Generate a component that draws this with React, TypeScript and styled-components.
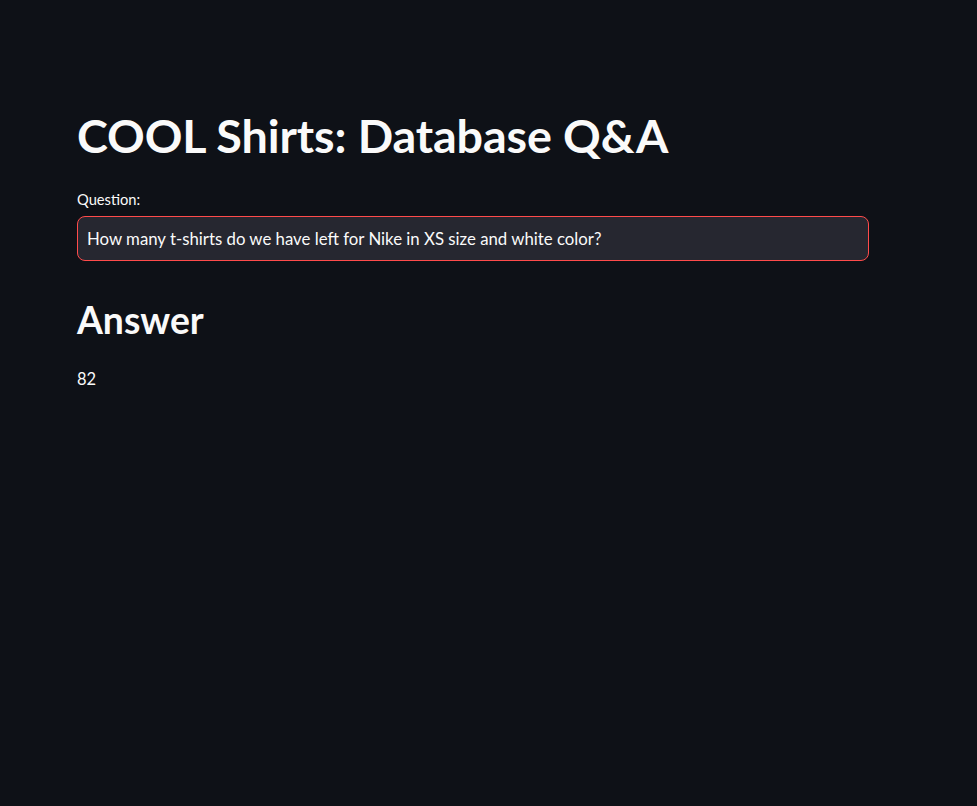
import React from "react";
import styled, { createGlobalStyle } from "styled-components";

const Global = createGlobalStyle`
  html, body { margin: 0; padding: 0; background: #0e1117; }
  body { font-family: Lato, "Noto Sans", sans-serif; color: #fafafa; }
  * { box-sizing: border-box; }
`;

const Page = styled.div`
  min-height: 806px;
  background: #0e1117;
  padding: 107px 109px 0 77px;
`;

const Title = styled.h1`
  margin: 0;
  font-size: 46.7px;
  font-weight: 700;
  line-height: 1.2;
  letter-spacing: -0.1px;
`;

const Field = styled.div`
  margin-top: 27px;
  display: flex;
  flex-direction: column;
  gap: 8px;
`;

const Label = styled.label`
  font-size: 14.7px;
  line-height: 18px;
`;

const Input = styled.div`
  height: 45px;
  width: 792px;
  background: #262730;
  border: 1px solid #ff4b4b;
  border-radius: 8px;
  display: flex;
  align-items: center;
  padding: 0 9px;
  font-size: 16.8px;
  color: #fafafa;
`;

const Heading = styled.h2`
  margin: 37px 0 0;
  font-size: 37.3px;
  font-weight: 700;
  line-height: 1.2;
`;

const Body = styled.p`
  margin: 26px 0 0;
  font-size: 16.5px;
`;

export default function App() {
  return (
    <>
      <Global />
      <Page>
        <Title>COOL Shirts: Database Q&amp;A</Title>
        <Field>
          <Label>Question:</Label>
          <Input>How many t-shirts do we have left for Nike in XS size and white color?</Input>
        </Field>
        <Heading>Answer</Heading>
        <Body>82</Body>
      </Page>
    </>
  );
}
